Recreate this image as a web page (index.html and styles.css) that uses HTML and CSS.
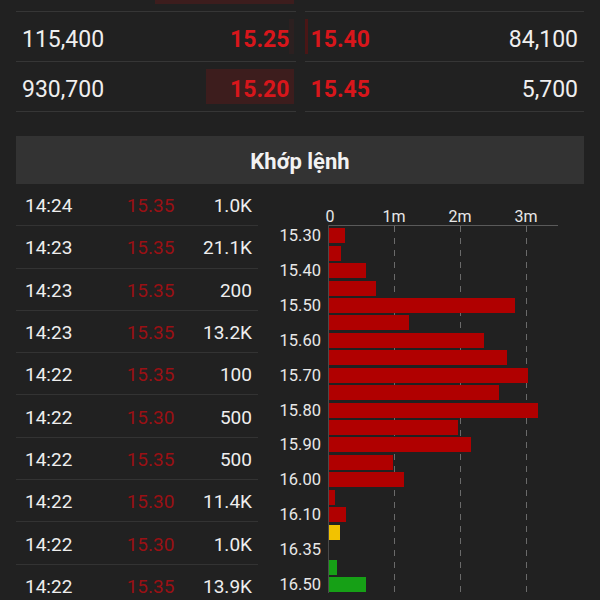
FILE: index.html
```html
<!DOCTYPE html>
<html lang="vi">
<head>
    <meta charset="UTF-8">
    <meta name="viewport" content="width=device-width, initial-scale=1.0">
    <title>Khớp lệnh</title>
    <link rel="stylesheet" href="styles.css">
</head>
<body>

    <!-- Order book (scrolled, first row mostly off screen) -->
    <div class="book">
        <div class="side bid">
            <div class="level"><span class="depth" style="width: 139px"></span></div>
            <div class="level"><span class="depth faint" style="width: 5px"></span><span class="vol">115,400</span><span class="px">15.25</span></div>
            <div class="level"><span class="depth" style="width: 88px"></span><span class="vol">930,700</span><span class="px">15.20</span></div>
        </div>
        <div class="side ask">
            <div class="level"></div>
            <div class="level"><span class="depth" style="width: 3px"></span><span class="px">15.40</span><span class="vol">84,100</span></div>
            <div class="level"><span class="px">15.45</span><span class="vol">5,700</span></div>
        </div>
    </div>

    <div class="section-title">Khớp lệnh</div>

    <div class="trades">
        <div class="ticks">
            <div class="tick"><span class="time">14:24</span><span class="price">15.35</span><span class="qty">1.0K</span></div>
            <div class="tick"><span class="time">14:23</span><span class="price">15.35</span><span class="qty">21.1K</span></div>
            <div class="tick"><span class="time">14:23</span><span class="price">15.35</span><span class="qty">200</span></div>
            <div class="tick"><span class="time">14:23</span><span class="price">15.35</span><span class="qty">13.2K</span></div>
            <div class="tick"><span class="time">14:22</span><span class="price">15.35</span><span class="qty">100</span></div>
            <div class="tick"><span class="time">14:22</span><span class="price">15.30</span><span class="qty">500</span></div>
            <div class="tick"><span class="time">14:22</span><span class="price">15.35</span><span class="qty">500</span></div>
            <div class="tick"><span class="time">14:22</span><span class="price">15.30</span><span class="qty">11.4K</span></div>
            <div class="tick"><span class="time">14:22</span><span class="price">15.30</span><span class="qty">1.0K</span></div>
            <div class="tick"><span class="time">14:22</span><span class="price">15.35</span><span class="qty">13.9K</span></div>
        </div>

        <div class="chart">
            <div class="axis-labels">
                <span class="axis-label at-0">0</span>
                <span class="axis-label at-1">1m</span>
                <span class="axis-label at-2">2m</span>
                <span class="axis-label at-3">3m</span>
            </div>
            <div class="plot">
                <span class="grid at-1"></span>
                <span class="grid at-2"></span>
                <span class="grid at-3"></span>

                <div class="bar-row"><span class="lbl">15.30</span><span class="bar" style="width: 16px"></span></div>
                <div class="bar-row"><span class="lbl"></span><span class="bar" style="width: 12px"></span></div>
                <div class="bar-row"><span class="lbl">15.40</span><span class="bar" style="width: 37px"></span></div>
                <div class="bar-row"><span class="lbl"></span><span class="bar" style="width: 47px"></span></div>
                <div class="bar-row"><span class="lbl">15.50</span><span class="bar" style="width: 186px"></span></div>
                <div class="bar-row"><span class="lbl"></span><span class="bar" style="width: 80px"></span></div>
                <div class="bar-row"><span class="lbl">15.60</span><span class="bar" style="width: 155px"></span></div>
                <div class="bar-row"><span class="lbl"></span><span class="bar" style="width: 178px"></span></div>
                <div class="bar-row"><span class="lbl">15.70</span><span class="bar" style="width: 199px"></span></div>
                <div class="bar-row"><span class="lbl"></span><span class="bar" style="width: 170px"></span></div>
                <div class="bar-row"><span class="lbl">15.80</span><span class="bar" style="width: 209px"></span></div>
                <div class="bar-row"><span class="lbl"></span><span class="bar" style="width: 129px"></span></div>
                <div class="bar-row"><span class="lbl">15.90</span><span class="bar" style="width: 142px"></span></div>
                <div class="bar-row"><span class="lbl"></span><span class="bar" style="width: 64px"></span></div>
                <div class="bar-row"><span class="lbl">16.00</span><span class="bar" style="width: 75px"></span></div>
                <div class="bar-row"><span class="lbl"></span><span class="bar" style="width: 6px"></span></div>
                <div class="bar-row"><span class="lbl">16.10</span><span class="bar" style="width: 17px"></span></div>
                <div class="bar-row"><span class="lbl"></span><span class="bar ref" style="width: 11px"></span></div>
                <div class="bar-row"><span class="lbl">16.35</span><span class="bar" style="width: 0"></span></div>
                <div class="bar-row"><span class="lbl"></span><span class="bar up" style="width: 8px"></span></div>
                <div class="bar-row"><span class="lbl">16.50</span><span class="bar up" style="width: 37px"></span></div>
            </div>
        </div>
    </div>

</body>
</html>
```

FILE: styles.css
```css
/* Reset */
* {
    box-sizing: border-box;
    margin: 0;
    padding: 0;
    font-family: Roboto, 'Liberation Sans', sans-serif;
}

body {
    background: #212121;
    color: #eeeeee;
    width: 600px;
    height: 600px;
    overflow: hidden;
}

/* Order book */
.book {
    display: flex;
    gap: 9px;
    margin: -38px 16px 0 16px;
}

.side {
    flex: 1;
}

.level {
    position: relative;
    display: flex;
    justify-content: space-between;
    align-items: center;
    height: 50px;
    border-bottom: 1px solid #363636;
    font-size: 23px;
    padding: 5px 6px 0 6px;
}

.level .vol {
    position: relative;
    color: #efefef;
}

.level .px {
    position: relative;
    color: #d8161b;
    font-weight: bold;
}

.depth {
    position: absolute;
    top: 7px;
    bottom: 7px;
    background: #3d1d1d;
}

.depth.faint {
    background: #2c2020;
}

.bid .depth {
    right: 2px;
}

.ask .depth {
    left: 0;
    background: #4a1616;
}

/* Section header */
.section-title {
    margin: 24px 16px 0 16px;
    height: 48px;
    background: #333333;
    color: #f2f2f2;
    font-size: 22px;
    font-weight: bold;
    display: flex;
    align-items: center;
    justify-content: center;
    padding-top: 2px;
}

/* Trades + volume chart */
.trades {
    display: flex;
}

.ticks {
    width: 242px;
    margin-left: 16px;
}

.tick {
    display: grid;
    grid-template-columns: 1fr 1fr 1fr;
    align-items: center;
    height: 42.3px;
    border-bottom: 1px solid #333333;
    font-size: 19px;
    padding: 2px 6px 0 9px;
}

.tick .price {
    color: #9a1014;
    text-align: center;
    padding-left: 24px;
}

.tick .qty {
    text-align: right;
}

.chart {
    margin-left: 12px;
    width: 300px;
}

.axis-labels {
    position: relative;
    height: 41px;
    margin-left: 58px;
    font-size: 16px;
    color: #e8e8e8;
}

.axis-label {
    position: absolute;
    top: 23px;
    transform: translateX(-50%);
}

.axis-label.at-0 { left: 2px; }
.axis-label.at-1 { left: 66px; }
.axis-label.at-2 { left: 132px; }
.axis-label.at-3 { left: 198px; }

.plot {
    position: relative;
    padding-top: 2px;
}

.plot::before {
    content: "";
    position: absolute;
    top: 0;
    left: 58px;
    width: 230px;
    border-top: 1px solid #5a5a5a;
}

.plot::after {
    content: "";
    position: absolute;
    top: 0;
    bottom: 0;
    left: 58px;
    border-left: 1px solid #4a4a4a;
}

.grid {
    position: absolute;
    top: 1px;
    bottom: 0;
    width: 1px;
    background: repeating-linear-gradient(to bottom, #6a6a6a 0 6px, transparent 6px 12px);
}

.grid.at-1 { left: 124px; }
.grid.at-2 { left: 190px; }
.grid.at-3 { left: 256px; }

.bar-row {
    position: relative;
    display: flex;
    align-items: center;
    height: 17.45px;
}

.lbl {
    width: 58px;
    padding-right: 7px;
    text-align: right;
    font-size: 16.5px;
    color: #e8e8e8;
}

.bar {
    height: 15px;
    margin-left: 1px;
    background: #b00000;
}

.bar.ref {
    background: #f2c200;
}

.bar.up {
    background: #16a016;
}
```
